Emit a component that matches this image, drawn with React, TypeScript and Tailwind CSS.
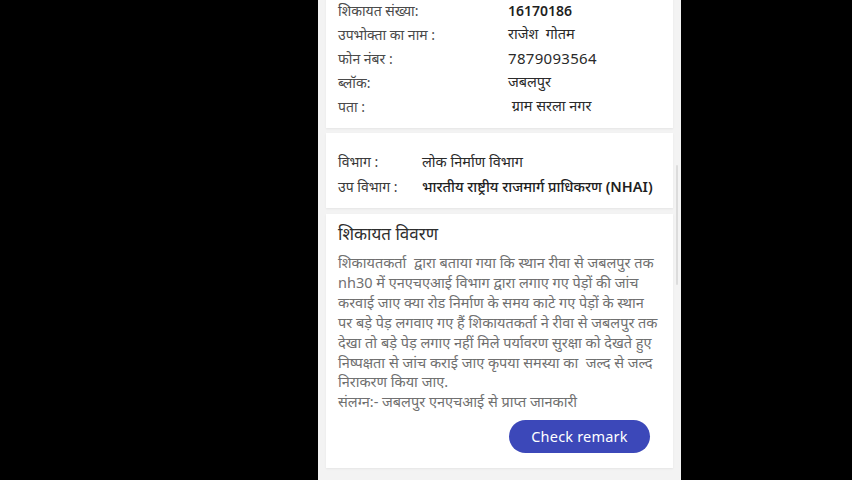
import React from "react";

const info = [
  { label: "शिकायत संख्या:", value: "16170186", bold: true },
  { label: "उपभोक्ता का नाम :", value: "राजेश  गोतम" },
  { label: "फोन नंबर :", value: "7879093564", num: true },
  { label: "ब्लॉक:", value: "जबलपुर" },
  { label: "पता :", value: "\u00a0ग्राम सरला नगर" },
];

const lines = [
  "शिकायतकर्ता  द्वारा बताया गया कि स्थान रीवा से जबलपुर तक",
  "nh30 में एनएचएआई विभाग द्वारा लगाए गए पेड़ों की जांच",
  "करवाई जाए क्या रोड निर्माण के समय काटे गए पेड़ों के स्थान",
  "पर बड़े पेड़ लगवाए गए हैं शिकायतकर्ता ने रीवा से जबलपुर तक",
  "देखा तो बड़े पेड़ लगाए नहीं मिले पर्यावरण सुरक्षा को देखते हुए",
  "निष्पक्षता से जांच कराई जाए कृपया समस्या का  जल्द से जल्द",
  "निराकरण किया जाए.",
  "संलग्न:- जबलपुर एनएचआई से प्राप्त जानकारी",
];

export default function App() {
  return (
    <div className="w-[852px] h-[480px] bg-black flex overflow-hidden font-['Noto_Sans',sans-serif]">
      <div className="relative ml-[318px] w-[363px] h-[480px] bg-[#f3f3f3] overflow-hidden">
        <div className="-mt-[14px] px-2 flex flex-col gap-[5px]">
          {/* complaint info */}
          <div className="bg-white shadow-[0_1px_2px_rgba(0,0,0,0.06)] pl-3 pr-3 pt-3 pb-[10px]">
            {info.map((r) => (
              <div key={r.label} className="flex items-center h-6 text-[14px]">
                <span className="w-[170px] shrink-0 text-[#4a4a4a]">{r.label}</span>
                <span
                  className={
                    r.bold
                      ? "text-[#1f1f1f] font-semibold text-[14px] whitespace-pre"
                      : r.num
                      ? "text-[#2a2a2a] text-[15px] tracking-[0.3px] whitespace-pre"
                      : "text-[#2a2a2a] text-[14.5px] whitespace-pre"
                  }
                >
                  {r.value}
                </span>
              </div>
            ))}
          </div>

          {/* department */}
          <div className="bg-white shadow-[0_1px_2px_rgba(0,0,0,0.06)] pl-3 pr-1 pt-4 pb-[9px]">
            <div className="flex items-center h-[25px] text-[14px]">
              <span className="w-[84px] shrink-0 text-[#3a3a3a]">विभाग :</span>
              <span className="text-[#2a2a2a] text-[14.5px]">लोक निर्माण विभाग</span>
            </div>
            <div className="flex items-center h-[25px] text-[14px]">
              <span className="w-[84px] shrink-0 text-[#3a3a3a]">उप विभाग :</span>
              <span className="text-[#1f1f1f] text-[14.5px] font-medium whitespace-nowrap">
                भारतीय राष्ट्रीय राजमार्ग प्राधिकरण <span className="font-semibold">(NHAI)</span>
              </span>
            </div>
          </div>

          {/* details */}
          <div className="bg-white shadow-[0_1px_2px_rgba(0,0,0,0.06)] pl-3 pr-[23px] pt-[9px] pb-[15px] mt-[1px]">
            <div className="text-[17px] leading-[22px] text-[#2e2e2e]">शिकायत विवरण</div>
            <div className="mt-2 text-[14.5px] leading-[19.9px] text-[#707070] -mr-3">
              {lines.map((l, i) => (
                <div key={i} className="whitespace-pre">
                  {l}
                </div>
              ))}
            </div>
            <div className="flex justify-end mt-2">
              <button className="w-[141px] h-[33px] rounded-full bg-[#3c48b9] text-white text-[14.5px] tracking-[0.2px]">
                Check remark
              </button>
            </div>
          </div>
        </div>
        {/* scrollbar */}
        <div className="absolute left-[358px] top-[165px] w-[2px] h-[120px] bg-[#dcdcdc] rounded-full" />
      </div>
    </div>
  );
}
